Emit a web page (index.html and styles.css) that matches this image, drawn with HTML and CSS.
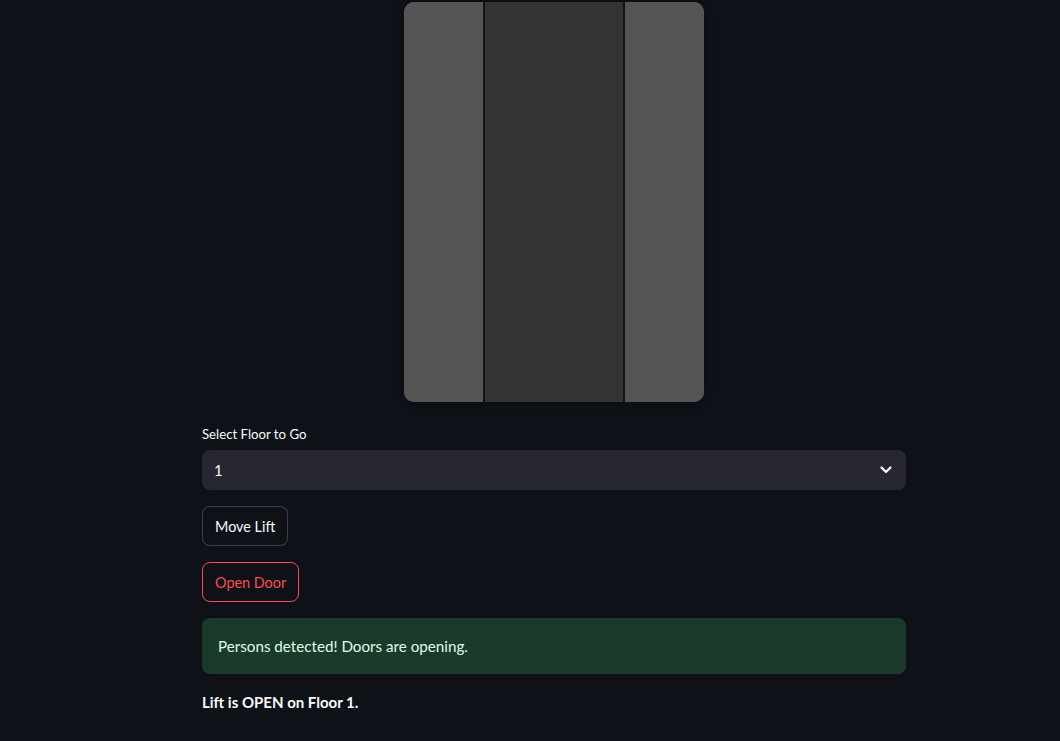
FILE: index.html
```html
<!DOCTYPE html>
<html>
<head>
<meta charset="utf-8">
<link rel="stylesheet" href="styles.css">
</head>
<body>
<main class="app">
  <div class="lift-wrap">
    <div class="lift">
      <div class="door"></div>
      <div class="cabin"></div>
      <div class="door"></div>
    </div>
  </div>
  <div class="field">
    <label class="label">Select Floor to Go</label>
    <div class="select">
      <span class="value">1</span>
      <svg class="chev" width="12" height="8" viewBox="0 0 12 8"><path d="M1.5 1.5 L6 6 L10.5 1.5" fill="none" stroke="#fafafa" stroke-width="2.2" stroke-linecap="round" stroke-linejoin="round"/></svg>
    </div>
  </div>
  <div class="row"><button class="btn">Move Lift</button></div>
  <div class="row"><button class="btn btn-red">Open Door</button></div>
  <div class="alert">Persons detected! Doors are opening.</div>
  <p class="status">Lift is OPEN on Floor 1.</p>
</main>
</body>
</html>
```

FILE: styles.css
```css
html, body {
  margin: 0;
  padding: 0;
  background: #0e1117;
  height: 100%;
}
body {
  font-family: "Source Sans Pro", Lato, "Noto Sans", sans-serif;
  color: #fafafa;
}
.app {
  width: 704px;
  margin-left: 202px;
  padding-top: 2px;
  display: flex;
  flex-direction: column;
  gap: 16px;
}
.lift-wrap {
  display: flex;
  justify-content: center;
}
.lift {
  width: 300px;
  height: 400px;
  border-radius: 10px;
  overflow: hidden;
  background: #555555;
  display: flex;
  box-shadow: 0 0 8px rgba(0,0,0,0.35);
}
.door {
  width: 79px;
  background: #555555;
}
.cabin {
  width: 138px;
  background: #333333;
  border-left: 2px solid #151515;
  border-right: 2px solid #151515;
}
.field {
  display: flex;
  flex-direction: column;
  gap: 4px;
}
.label {
  font-size: 13.2px;
  line-height: 24px;
  padding-top: 4px;
  color: #fafafa;
}
.select {
  height: 40px;
  background: #262730;
  border-radius: 8px;
  display: flex;
  align-items: center;
  justify-content: space-between;
  padding: 0 14px 0 12px;
  font-size: 15px;
}
.chev {
  display: block;
}
.row {
  display: flex;
}
.btn {
  height: 40px;
  padding: 0 12px;
  border-radius: 8px;
  background: #0e1117;
  border: 1px solid rgba(250,250,250,0.2);
  color: #fafafa;
  font-family: inherit;
  font-size: 14.4px;
}
.btn-red {
  border-color: #ff4b4b;
  color: #ff4b4b;
}
.alert {
  height: 56px;
  box-sizing: border-box;
  padding: 0 16px;
  display: flex;
  align-items: center;
  background: #1b3b2a;
  color: #dffde9;
  border-radius: 8px;
  font-size: 15.2px;
}
.status {
  margin: 0;
  font-weight: 700;
  font-size: 15px;
  line-height: 24px;
}
```
